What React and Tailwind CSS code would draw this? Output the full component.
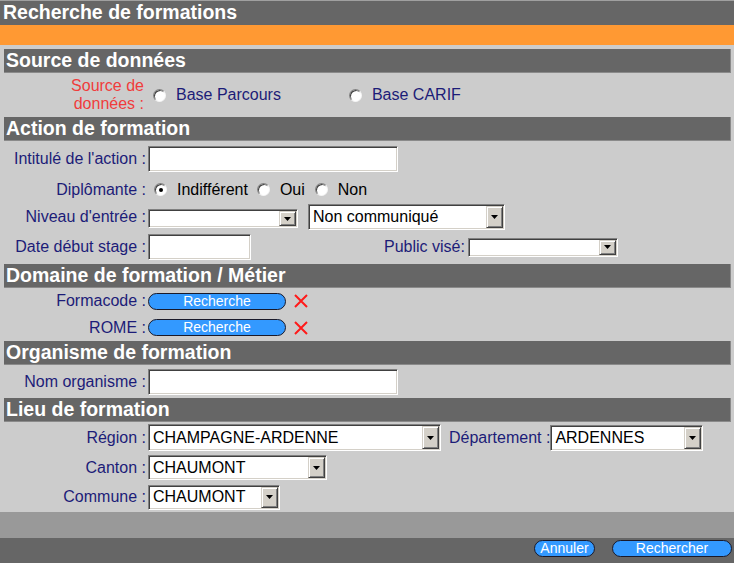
import React from "react";

const navy = "text-[#1c1c78]";

function SectionHeader({ children }) {
    return (
        <div className="h-[24px] ml-[4px] mr-[3px] bg-[#666666] border-b border-r border-[#8a8a8a] text-white font-bold text-[19.5px] leading-[23px] pl-[2px] whitespace-nowrap">
            {children}
        </div>
    );
}

function Label({ children }) {
    return (
        <div className={`w-[146px] shrink-0 text-right text-[16px] leading-[18px] whitespace-nowrap ${navy}`}>
            {children}
        </div>
    );
}

function TextInput({ w }) {
    return (
        <div
            className={`${w} h-[26px] ml-[2px] bg-white border border-t-[#808080] border-l-[#808080] border-b-white border-r-white shadow-[inset_1px_1px_0_#404040,inset_-1px_-1px_0_#d4d0c8]`}
        />
    );
}

function Arrow() {
    return (
        <div className="w-[17px] shrink-0 bg-[#d4d0c8] border border-t-[#d4d0c8] border-l-[#d4d0c8] border-b-[#404040] border-r-[#404040] shadow-[inset_1px_1px_0_#ffffff,inset_-1px_-1px_0_#808080] flex items-center justify-center">
            <svg width="7" height="4" viewBox="0 0 7 4">
                <path d="M0 0h7L3.5 4z" fill="#000" />
            </svg>
        </div>
    );
}

function Select({ w, h, value, className = "" }) {
    return (
        <div
            className={`${w} ${h} ${className} flex p-[1px] bg-white border border-t-[#808080] border-l-[#808080] border-b-white border-r-white shadow-[inset_1px_1px_0_#404040,inset_-1px_-1px_0_#d4d0c8]`}
        >
            <div className="flex-1 min-w-0 pl-[3px] text-[16px] text-black leading-none flex items-center whitespace-nowrap overflow-hidden">
                {value}
            </div>
            <Arrow />
        </div>
    );
}

function Radio({ checked }) {
    return (
        <div className="w-[13px] h-[13px] shrink-0 rounded-full bg-white border border-t-[#808080] border-l-[#808080] border-b-[#f4f4f4] border-r-[#f4f4f4] shadow-[inset_1px_1px_0_#404040] flex items-center justify-center">
            {checked && <div className="w-[4px] h-[4px] rounded-full bg-black" />}
        </div>
    );
}

function PillButton({ w, children, className = "" }) {
    return (
        <div
            className={`${w} ${className} h-[17px] rounded-full bg-[#3399ff] border border-[#1a1a2a] text-white text-[14px] leading-[15px] text-center whitespace-nowrap`}
        >
            {children}
        </div>
    );
}

function RedCross() {
    return (
        <svg width="16" height="16" viewBox="0 0 16 16" className="ml-[7px]">
            <path d="M2 2L14 14M14 2L2 14" stroke="#ff1a1a" strokeWidth="2" />
        </svg>
    );
}

export default function App() {
    return (
        <div className="w-[734px] h-[563px] bg-[#cccccc] flex flex-col overflow-hidden font-['Liberation_Sans',Arial,sans-serif]">
            <div className="h-[25px] shrink-0 bg-[#666666] border-t border-[#a0a0a0] text-white font-bold text-[19.5px] leading-[22px] pl-[3px] whitespace-nowrap">
                Recherche de formations
            </div>
            <div className="h-[20px] shrink-0 bg-[#ff9933]" />
            <div className="h-[4px] shrink-0" />

            <SectionHeader>Source de données</SectionHeader>
            <div className="h-[44px] flex items-center">
                <div className="w-[146px] shrink-0 text-right text-[16px] leading-[18px] text-[#f03c3c] pr-[2px]">
                    Source de
                    <br />
                    données :
                </div>
                <div className="ml-[7px]">
                    <Radio />
                </div>
                <span className={`ml-[10px] text-[16px] ${navy}`}>Base Parcours</span>
                <div className="ml-[68px]">
                    <Radio />
                </div>
                <span className={`ml-[10px] text-[16px] ${navy}`}>Base CARIF</span>
            </div>

            <SectionHeader>Action de formation</SectionHeader>
            <div className="h-[35px] flex items-center">
                <Label>Intitulé de l'action :</Label>
                <TextInput w="w-[250px]" />
            </div>
            <div className="h-[27px] flex items-center text-[16px]">
                <Label>Diplômante :</Label>
                <div className="ml-[8px]">
                    <Radio checked />
                </div>
                <span className="ml-[10px] text-black">Indifférent</span>
                <div className="ml-[9px]">
                    <Radio />
                </div>
                <span className="ml-[10px] text-black">Oui</span>
                <div className="ml-[10px]">
                    <Radio />
                </div>
                <span className="ml-[10px] text-black">Non</span>
            </div>
            <div className="h-[27px] flex items-center">
                <Label>Niveau d'entrée :</Label>
                <Select w="w-[150px]" h="h-[19px]" value="" className="ml-[2px] mt-[4px]" />
                <Select w="w-[197px]" h="h-[26px]" value="Non communiqué" className="ml-[10px]" />
            </div>
            <div className="h-[34px] flex items-center">
                <Label>Date début stage :</Label>
                <TextInput w="w-[103px]" />
                <span className={`ml-[133px] text-[16px] whitespace-nowrap ${navy}`}>Public visé:</span>
                <Select w="w-[150px]" h="h-[19px]" value="" className="ml-[3px]" />
            </div>

            <SectionHeader>Domaine de formation / Métier</SectionHeader>
            <div className="h-[26px] flex items-center">
                <Label>Formacode :</Label>
                <PillButton w="w-[138px]" className="ml-[2px]">Recherche</PillButton>
                <RedCross />
            </div>
            <div className="h-[27px] flex items-center">
                <Label>ROME :</Label>
                <PillButton w="w-[138px]" className="ml-[2px]">Recherche</PillButton>
                <RedCross />
            </div>

            <SectionHeader>Organisme de formation</SectionHeader>
            <div className="h-[33px] flex items-center">
                <Label>Nom organisme :</Label>
                <TextInput w="w-[250px]" />
            </div>

            <SectionHeader>Lieu de formation</SectionHeader>
            <div className="h-[31px] flex items-center">
                <Label>Région :</Label>
                <Select w="w-[293px]" h="h-[27px]" value="CHAMPAGNE-ARDENNE" className="ml-[2px]" />
                <span className={`ml-[8px] text-[16px] whitespace-nowrap ${navy}`}>Département :</span>
                <Select w="w-[153px]" h="h-[26px]" value="ARDENNES" />
            </div>
            <div className="h-[29px] flex items-center">
                <Label>Canton :</Label>
                <Select w="w-[179px]" h="h-[25px]" value="CHAUMONT" className="ml-[2px]" />
            </div>
            <div className="h-[30px] flex items-center">
                <Label>Commune :</Label>
                <Select w="w-[132px]" h="h-[25px]" value="CHAUMONT" className="ml-[2px]" />
            </div>

            <div className="h-[26px] shrink-0 bg-[#999999]" />
            <div className="flex-1 bg-[#666666] flex items-start justify-end pt-[2px] pr-[2px]">
                <PillButton w="w-[61px]">Annuler</PillButton>
                <PillButton w="w-[120px]" className="ml-[17px]">Rechercher</PillButton>
            </div>
        </div>
    );
}
